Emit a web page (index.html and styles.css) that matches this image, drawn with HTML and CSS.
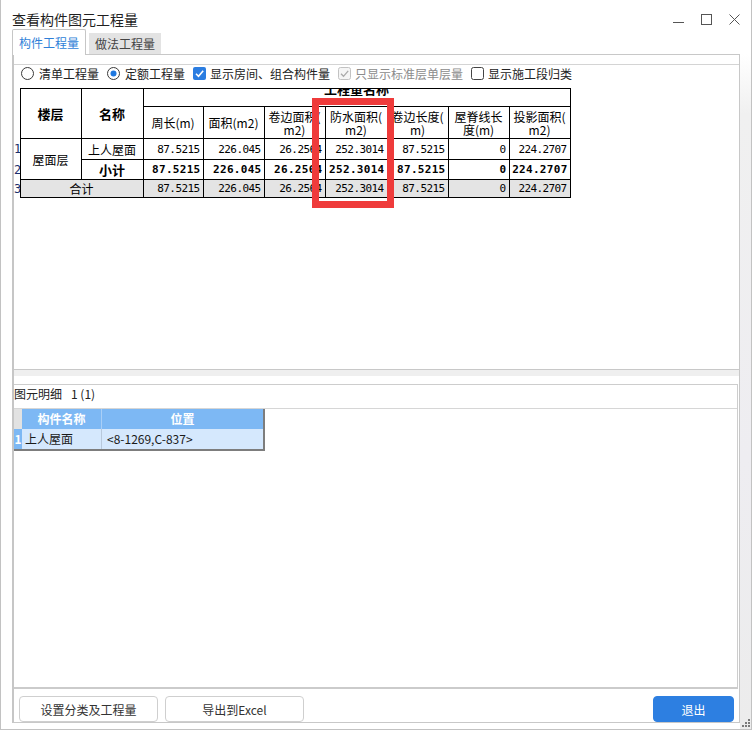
FILE: index.html
```html
<!DOCTYPE html>
<html lang="zh-CN">
<head>
<meta charset="utf-8">
<title>查看构件图元工程量</title>
<link rel="stylesheet" href="styles.css">
</head>
<body>
<div class="window">
  <div class="titlebar">
    <span class="title">查看构件图元工程量</span>
    <div class="controls">
      <svg viewBox="0 0 11 11"><path d="M0 8.5H11" stroke="#555" stroke-width="1"/></svg>
      <svg viewBox="0 0 11 11"><rect x="0.5" y="0.5" width="10" height="10" fill="none" stroke="#555"/></svg>
      <svg viewBox="0 0 11 11"><path d="M0.5 0.5L10.5 10.5M10.5 0.5L0.5 10.5" stroke="#555" stroke-width="1"/></svg>
    </div>
  </div>
  <div class="tabs">
    <div class="tab tab-active">构件工程量</div>
    <div class="tab tab-inactive">做法工程量</div>
  </div>
  <div class="panelrow">
    <div class="tabpanel">
      <div class="upper">
        <div class="options">
          <label class="opt">
            <svg class="ctl" viewBox="0 0 13 13"><circle cx="6.5" cy="6.5" r="6" fill="#fff" stroke="#3a3a3a"/></svg>
            <span>清单工程量</span>
          </label>
          <label class="opt">
            <svg class="ctl" viewBox="0 0 13 13"><circle cx="6.5" cy="6.5" r="6" fill="#fff" stroke="#3a3a3a"/><circle cx="6.5" cy="6.5" r="3" fill="#1f78e0"/></svg>
            <span>定额工程量</span>
          </label>
          <label class="opt opt-cb">
            <svg class="ctl" viewBox="0 0 13 13"><rect x="0" y="0" width="13" height="13" rx="2" fill="#2b7de1"/><path d="M3 6.8L5.5 9.3L10.2 3.8" fill="none" stroke="#fff" stroke-width="1.6"/></svg>
            <span>显示房间、组合构件量</span>
          </label>
          <label class="opt opt-cb disabled">
            <svg class="ctl" viewBox="0 0 13 13"><rect x="0.5" y="0.5" width="12" height="12" rx="2" fill="#f5f5f5" stroke="#c2c2c2"/><path d="M3 6.8L5.5 9.3L10.2 3.8" fill="none" stroke="#a9a9a9" stroke-width="1.3"/></svg>
            <span>只显示标准层单层量</span>
          </label>
          <label class="opt opt-cb">
            <svg class="ctl" viewBox="0 0 13 13"><rect x="0.5" y="0.5" width="12" height="12" rx="2" fill="#fff" stroke="#444"/></svg>
            <span>显示施工段归类</span>
          </label>
        </div>
        <div class="grid-wrap">
          <table class="qty">
            <colgroup>
              <col class="w6"><col class="w61"><col class="w62"><col class="w60"><col class="w61"><col class="w61"><col class="w62"><col class="w61"><col class="w61"><col class="w61">
            </colgroup>
            <tr class="h1">
              <td class="rn"></td>
              <th class="hb" rowspan="2">楼层</th>
              <th class="hb" rowspan="2">名称</th>
              <th class="group" colspan="7"><div class="grp">工程量名称</div></th>
            </tr>
            <tr class="h2">
              <td class="rn"></td>
              <th>周长(m)</th>
              <th>面积(m2)</th>
              <th class="two">卷边面积(<br>m2)</th>
              <th class="two">防水面积(<br>m2)</th>
              <th class="two">卷边长度(<br>m)</th>
              <th class="two">屋脊线长<br>度(m)</th>
              <th class="two">投影面积(<br>m2)</th>
            </tr>
            <tr class="r1">
              <td class="rn">1</td>
              <td rowspan="2">屋面层</td>
              <td>上人屋面</td>
              <td class="n">87.5215</td>
              <td class="n">226.045</td>
              <td class="n">26.2564</td>
              <td class="n">252.3014</td>
              <td class="n">87.5215</td>
              <td class="n">0</td>
              <td class="n">224.2707</td>
            </tr>
            <tr class="r2 b">
              <td class="rn">2</td>
              <td class="hb">小计</td>
              <td class="n">87.5215</td>
              <td class="n">226.045</td>
              <td class="n">26.2564</td>
              <td class="n">252.3014</td>
              <td class="n">87.5215</td>
              <td class="n">0</td>
              <td class="n">224.2707</td>
            </tr>
            <tr class="r3 total">
              <td class="rn">3</td>
              <td colspan="2">合计</td>
              <td class="n">87.5215</td>
              <td class="n">226.045</td>
              <td class="n">26.2564</td>
              <td class="n">252.3014</td>
              <td class="n">87.5215</td>
              <td class="n">0</td>
              <td class="n">224.2707</td>
            </tr>
          </table>
        </div>
      </div>
      <div class="splitter"></div>
      <div class="lower">
        <div class="lower-title">图元明细<span class="count">1 (1)</span></div>
        <div class="dgrid">
          <div class="corner"></div>
          <div class="gh">构件名称</div>
          <div class="gh gh-last">位置</div>
          <div class="rh">1</div>
          <div class="gc">上人屋面</div>
          <div class="gc gc-last">&lt;8-1269,C-837&gt;</div>
        </div>
      </div>
      <div class="buttons">
        <div class="btn">设置分类及工程量</div>
        <div class="btn">导出到Excel</div>
        <div class="btn btn-primary">退出</div>
      </div>
    </div>
    <div class="strip">
      <svg class="grip" viewBox="0 0 9 9"><rect x="7" y="1" width="2" height="2" fill="#7a7a7a"/><rect x="4" y="4" width="2" height="2" fill="#7a7a7a"/><rect x="7" y="4" width="2" height="2" fill="#7a7a7a"/><rect x="1" y="7" width="2" height="2" fill="#7a7a7a"/><rect x="4" y="7" width="2" height="2" fill="#7a7a7a"/><rect x="7" y="7" width="2" height="2" fill="#7a7a7a"/></svg>
    </div>
  </div>
  <div class="highlight"></div>
</div>
</body>
</html>
```

FILE: styles.css
```css
html, body {
  margin: 0;
  padding: 0;
  background: #fff;
}
body {
  font-family: "Noto Sans CJK SC", "Noto Sans", sans-serif;
  font-size: 12px;
  color: #222;
}
.window {
  position: relative;
  width: 752px;
  height: 730px;
  box-sizing: border-box;
  border: 1px solid #c2c2c2;
  border-top: none;
  background: #fff;
  display: flex;
  flex-direction: column;
}
.titlebar {
  height: 29px;
  flex: none;
  box-sizing: border-box;
  padding: 10px 11px 0 11px;
  display: flex;
  align-items: center;
}
.title {
  font-size: 14px;
  line-height: 19px;
  color: #1f1f1f;
}
.controls {
  margin-left: auto;
  display: flex;
  gap: 17px;
}
.controls svg {
  width: 11px;
  height: 11px;
  display: block;
}
.tabs {
  height: 25px;
  flex: none;
  display: flex;
  align-items: flex-end;
  padding-left: 11px;
}
.tab {
  box-sizing: border-box;
  display: flex;
  align-items: center;
  justify-content: center;
  font-size: 12px;
}
.tab-active {
  position: relative;
  z-index: 1;
  width: 74px;
  height: 26px;
  margin-bottom: -1px;
  border: 1px solid #c6c6c6;
  border-bottom: none;
  border-radius: 2px 2px 0 0;
  background: #fff;
  color: #2f7fd8;
}
.tab-inactive {
  width: 72px;
  height: 21px;
  margin-left: 3px;
  background: #e3e3e3;
  color: #444;
}
.panelrow {
  flex: 1;
  display: flex;
  min-height: 0;
}
.tabpanel {
  margin-left: 11px;
  margin-bottom: 6px;
  width: 728px;
  box-sizing: border-box;
  border: 1px solid #c8c8c8;
  border-left: 2px solid #c6c6c6;
  padding-top: 9px;
  display: flex;
  flex-direction: column;
}
.strip {
  width: 11px;
  display: flex;
  flex-direction: column;
  justify-content: flex-end;
  align-items: flex-start;
  background: linear-gradient(#ffffff, #f0f0f0 60px, #eeedf1 60%, #ececec);
}
.grip {
  width: 9px;
  height: 9px;
  margin: 0 0 2px 1px;
  display: block;
}
.upper {
  height: 306px;
  flex: none;
  box-sizing: border-box;
  border-top: 1px solid #d4d4d4;
  border-bottom: 1px solid #c8c8c8;
}
.options {
  height: 17px;
  display: flex;
  align-items: center;
  padding-left: 7px;
  gap: 8px;
  font-size: 12px;
  color: #222;
}
.opt {
  display: flex;
  align-items: center;
  gap: 5px;
}
.opt-cb {
  gap: 4px;
}
.opt.disabled {
  color: #8c8c8c;
}
.ctl {
  width: 13px;
  height: 13px;
  display: block;
}
.grid-wrap {
  margin-top: 6px;
}
table.qty {
  border-collapse: collapse;
  table-layout: fixed;
  width: 556px;
  font-size: 12px;
  color: #000;
}
.w6 { width: 6px; }
.w60 { width: 60px; }
.w61 { width: 61px; }
.w62 { width: 62px; }
.qty td, .qty th {
  border: 1px solid #000;
  padding: 0 2px;
  overflow: hidden;
  white-space: nowrap;
  text-align: center;
  font-weight: normal;
}
.qty .rn {
  border: none;
  padding: 0;
  text-align: left;
  font-family: "DejaVu Sans Mono", monospace;
  font-size: 12px;
  color: #1b2f6b;
  background: #fff;
}
.qty .hb {
  font-weight: bold;
  font-size: 13px;
}
.qty .group {
  vertical-align: top;
  padding: 0;
}
.grp {
  line-height: 18px;
  margin-top: -9px;
  font-weight: bold;
  font-size: 13px;
}
.qty .two {
  line-height: 13px;
}
.h1 { height: 18px; }
.h2 { height: 32px; }
.r1 { height: 21px; }
.r2 { height: 19px; }
.r3 { height: 18px; }
.qty .n {
  text-align: right;
  font-family: "DejaVu Sans Mono", monospace;
  font-size: 11px;
  letter-spacing: -0.6px;
  padding-right: 3px;
}
.qty .b .n {
  font-weight: bold;
  letter-spacing: 0.3px;
  padding-right: 2px;
}
.total td:not(.rn) {
  background: #e4e4e4;
}
.splitter {
  height: 6px;
  flex: none;
  background: #efefef;
}
.lower {
  margin-top: 8px;
  margin-right: 1px;
  height: 305px;
  flex: none;
  box-sizing: border-box;
  border-top: 1px solid #cdcdcd;
  border-right: 1px solid #cdcdcd;
  border-bottom: 2px solid #cbcbcb;
}
.lower-title {
  height: 23px;
  line-height: 18px;
  border-bottom: 1px solid #d6d6d6;
  color: #222;
}
.count {
  margin-left: 9px;
}
.dgrid {
  display: grid;
  grid-template-columns: 8px 80px 161px;
  grid-template-rows: 20px 20px;
  width: max-content;
  border-right: 2px solid #7d7d7d;
  border-bottom: 2px solid #7d7d7d;
  font-size: 12px;
}
.corner {
  background: #e2e2e2;
}
.gh {
  background: #7db8f4;
  color: #fff;
  font-weight: bold;
  text-align: center;
  line-height: 20px;
  border-right: 1px solid #a9cff7;
}
.gh-last {
  border-right: none;
}
.rh {
  background: #7db8f4;
  color: #fff;
  font-weight: bold;
  text-align: center;
  line-height: 20px;
  overflow: hidden;
}
.gc {
  background: #d5e8fd;
  color: #1a1a1a;
  line-height: 20px;
  padding-left: 3px;
  border-right: 1px solid #b8c9dc;
  white-space: nowrap;
}
.gc-last {
  border-right: none;
  padding-left: 5px;
}
.buttons {
  margin-top: 7px;
  height: 26px;
  flex: none;
  display: flex;
  gap: 7px;
  padding: 0 5px;
}
.btn {
  width: 139px;
  box-sizing: border-box;
  border: 1px solid #cfcfcf;
  border-radius: 4px;
  background: #fff;
  display: flex;
  align-items: center;
  justify-content: center;
  font-size: 12px;
  color: #333;
}
.btn-primary {
  margin-left: auto;
  width: 81px;
  background: #2d7fe1;
  border-color: #2d7fe1;
  color: #fff;
}
.highlight {
  position: absolute;
  left: 311px;
  top: 98px;
  width: 82px;
  height: 110px;
  box-sizing: border-box;
  border: 7px solid #ef3b3b;
}
```
